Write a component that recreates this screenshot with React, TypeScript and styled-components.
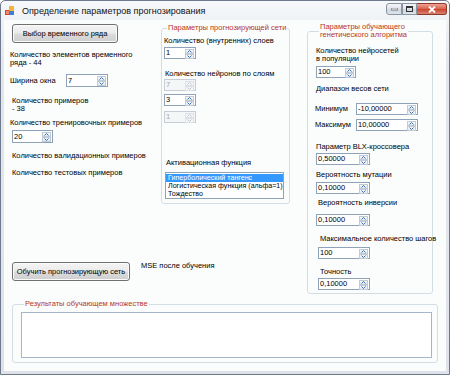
import React from "react";
import styled, { createGlobalStyle } from "styled-components";

const Global = createGlobalStyle`
  html, body {
    margin: 0;
    padding: 0;
    background: #ffffff;
  }
  body {
    font-family: "Liberation Sans", Arial, sans-serif;
    font-size: 7.5px;
    color: #000;
  }
`;

const Window = styled.div`
  width: 450px;
  height: 375px;
  box-sizing: border-box;
  border: 1px solid #6f7b8c;
  border-radius: 5px 5px 0 0;
  background: linear-gradient(#f6f8fa, #e2e7ed 60px, #dde3e9);
  display: flex;
  flex-direction: column;
  padding: 0 3px 3px 3px;
`;

const TitleBar = styled.div`
  height: 19px;
  display: flex;
  align-items: center;
  padding-left: 1px;
`;

const TitleText = styled.span`
  font-size: 9px;
  margin-left: 7px;
  color: #111;
  flex: 1;
`;

const CaptionButtons = styled.div`
  display: flex;
  align-self: flex-start;
  margin-top: 2px;
  margin-right: -1px;
`;

const CaptionButton = styled.div<{ $close?: boolean; $w: number }>`
  width: ${(p) => p.$w}px;
  height: 12px;
  box-sizing: border-box;
  border: 1px solid ${(p) => (p.$close ? "#8d3a2c" : "#8a94a2")};
  border-left-width: ${(p) => (p.$close ? 0 : 1)}px;
  border-radius: ${(p) => (p.$close ? "0 3px 3px 0" : "0")};
  background: ${(p) =>
    p.$close
      ? "linear-gradient(#eea394, #d8604a 50%, #c9452d 51%, #d8826f)"
      : "linear-gradient(#f3f5f8, #dfe4ea 50%, #cfd6de 51%, #dde3ea)"};
  display: flex;
  align-items: center;
  justify-content: center;
  &:first-child {
    border-radius: 3px 0 0 3px;
  }
`;

const Client = styled.div`
  flex: 1;
  background: #fbfdfd;
  display: flex;
  flex-direction: column;
`;

const TopArea = styled.div`
  display: flex;
  align-items: flex-start;
`;

const LeftColumn = styled.div`
  width: 157px;
  padding-left: 6px;
  box-sizing: border-box;
  display: flex;
  flex-direction: column;
  align-items: flex-start;
`;

const Label = styled.div<{ $mt?: number; $ml?: number; $w?: number }>`
  margin-top: ${(p) => p.$mt ?? 0}px;
  margin-left: ${(p) => p.$ml ?? 0}px;
  ${(p) => (p.$w ? `width: ${p.$w}px; flex: none;` : "")}
  line-height: 8px;
  font-size: 7.5px;
  white-space: nowrap;
`;

const Button = styled.div<{ $mt?: number; $ml?: number; $w: number }>`
  margin-top: ${(p) => p.$mt ?? 0}px;
  margin-left: ${(p) => p.$ml ?? 0}px;
  width: ${(p) => p.$w}px;
  height: 19px;
  box-sizing: border-box;
  border: 1px solid #707070;
  border-radius: 3px;
  background: linear-gradient(#f4f4f4, #ebebeb 48%, #dcdcdc 52%, #cfcfcf);
  box-shadow: inset 0 0 0 1px #fbfbfb;
  display: flex;
  align-items: center;
  justify-content: center;
  font-size: 7.5px;
  flex: none;
`;

const Row = styled.div<{ $mt?: number; $ml?: number }>`
  display: flex;
  align-items: center;
  margin-top: ${(p) => p.$mt ?? 0}px;
  margin-left: ${(p) => p.$ml ?? 0}px;
`;

const TopRow = styled(Row)`
  align-items: flex-start;
`;

const SpinBox = styled.div<{
  $mt?: number;
  $ml?: number;
  $w: number;
  $h?: number;
  $disabled?: boolean;
}>`
  margin-top: ${(p) => p.$mt ?? 0}px;
  margin-left: ${(p) => p.$ml ?? 0}px;
  width: ${(p) => p.$w}px;
  height: ${(p) => p.$h ?? 12}px;
  box-sizing: border-box;
  border: 1px solid ${(p) => (p.$disabled ? "#c6cdd6" : "#8fa3b8")};
  background: ${(p) => (p.$disabled ? "#f5f6f7" : "#ffffff")};
  color: ${(p) => (p.$disabled ? "#a8a8a8" : "#000")};
  display: flex;
  align-items: stretch;
  flex: none;
`;

const SpinValue = styled.div`
  flex: 1;
  font-size: 7.5px;
  line-height: 10px;
  padding-left: 1px;
  display: flex;
  align-items: center;
`;

const SpinButtons = styled.div`
  width: 9px;
  display: flex;
  flex-direction: column;
  padding: 1px 1px 1px 0;
`;

const SpinArrow = styled.div<{ $disabled?: boolean }>`
  flex: 1;
  box-sizing: border-box;
  border: 1px solid ${(p) => (p.$disabled ? "#dde2e8" : "#bfcbd8")};
  background: ${(p) => (p.$disabled ? "#f4f5f6" : "linear-gradient(#f7f9fb, #e3e9ef)")};
  display: flex;
  align-items: center;
  justify-content: center;
`;

const Group = styled.fieldset<{ $mt?: number; $ml?: number; $w: number; $pl: number; $pb: number }>`
  margin: ${(p) => p.$mt ?? 0}px 0 0 ${(p) => p.$ml ?? 0}px;
  width: ${(p) => p.$w}px;
  box-sizing: border-box;
  border: 1px solid #d3dde4;
  border-radius: 3px;
  padding: 0 0 ${(p) => p.$pb}px ${(p) => p.$pl}px;
  display: flex;
  flex-direction: column;
  align-items: flex-start;
  min-width: 0;
`;

const Legend = styled.legend`
  color: #b8361c;
  font-size: 7.5px;
  line-height: 8px;
  padding: 0 1px;
  margin-left: 3px;
  white-space: nowrap;
`;

const ListBox = styled.div<{ $mt?: number; $ml?: number }>`
  margin-top: ${(p) => p.$mt ?? 0}px;
  margin-left: ${(p) => p.$ml ?? 0}px;
  width: 119px;
  height: 27px;
  box-sizing: border-box;
  border: 1px solid #8fa3b8;
  background: #fff;
  padding: 1px 0 0 0;
  overflow: hidden;
`;

const ListItem = styled.div<{ $selected?: boolean }>`
  height: 8px;
  line-height: 8px;
  padding-left: 2px;
  font-size: 7.1px;
  white-space: nowrap;
  background: ${(p) => (p.$selected ? "#3399ff" : "transparent")};
  color: ${(p) => (p.$selected ? "#fff" : "#000")};
`;

const TextArea = styled.div`
  margin-top: 4px;
  width: 411px;
  height: 46px;
  box-sizing: border-box;
  border: 1px solid #a4b6c7;
  background: #fff;
`;

const Arrow = ({ down, disabled }: { down?: boolean; disabled?: boolean }) => (
  <svg width="5" height="3" viewBox="0 0 5 3">
    <path
      d={down ? "M0.5 0.5 L2.5 2.5 L4.5 0.5" : "M0.5 2.5 L2.5 0.5 L4.5 2.5"}
      fill="none"
      stroke={disabled ? "#c2c8cf" : "#3c6fb0"}
      strokeWidth="1"
    />
  </svg>
);

type SpinProps = {
  value: string;
  w: number;
  mt?: number;
  ml?: number;
  h?: number;
  disabled?: boolean;
};

const Spin = ({ value, w, mt, ml, h, disabled }: SpinProps) => (
  <SpinBox $w={w} $mt={mt} $ml={ml} $h={h} $disabled={disabled}>
    <SpinValue>{value}</SpinValue>
    <SpinButtons>
      <SpinArrow $disabled={disabled}>
        <Arrow disabled={disabled} />
      </SpinArrow>
      <SpinArrow $disabled={disabled}>
        <Arrow down disabled={disabled} />
      </SpinArrow>
    </SpinButtons>
  </SpinBox>
);

const AppIcon = () => (
  <svg width="10" height="10" viewBox="0 0 10 10">
    <rect x="0" y="4" width="5" height="5" fill="#d8452b" />
    <rect x="4" y="0" width="5" height="5" fill="#f2b632" />
    <rect x="5" y="5" width="4" height="4" fill="#3d7fd6" />
    <rect x="1" y="5" width="3" height="3" fill="#f08a70" />
  </svg>
);

export default function App() {
  return (
    <>
      <Global />
      <Window>
        <TitleBar>
          <AppIcon />
          <TitleText>Определение параметров прогнозирования</TitleText>
          <CaptionButtons>
            <CaptionButton $w={16}>
              <svg width="7" height="3" viewBox="0 0 7 3">
                <rect x="0" y="0" width="7" height="2" fill="#fff" stroke="#333" strokeWidth="0.6" />
              </svg>
            </CaptionButton>
            <CaptionButton $w={15}>
              <svg width="7" height="6" viewBox="0 0 7 6">
                <rect x="0.5" y="0.5" width="6" height="5" fill="none" stroke="#333" strokeWidth="1" />
                <rect x="1" y="1" width="5" height="1" fill="#333" />
              </svg>
            </CaptionButton>
            <CaptionButton $w={30} $close>
              <svg width="8" height="7" viewBox="0 0 8 7">
                <path d="M1 0.5 L7 6.5 M7 0.5 L1 6.5" stroke="#fff" strokeWidth="1.8" />
              </svg>
            </CaptionButton>
          </CaptionButtons>
        </TitleBar>
        <Client>
          <TopArea>
            <LeftColumn>
              <Button $mt={4} $ml={2} $w={106}>
                Выбор временного ряда
              </Button>
              <Label $mt={8}>
                Количество элементов временного
                <br />
                ряда - 44
              </Label>
              <Row $mt={7}>
                <Label $w={56}>Ширина окна</Label>
                <Spin value="7" w={42} h={13} />
              </Row>
              <Label $mt={10} $ml={2}>
                Количество примеров
                <br />- 38
              </Label>
              <Label $mt={6}>Количество тренировочных примеров</Label>
              <Spin value="20" w={41} h={13} mt={3} ml={2} />
              <Label $mt={9} $ml={2}>
                Количество валидационных примеров
              </Label>
              <Label $mt={9} $ml={2}>
                Количество тестовых примеров
              </Label>
              <TopRow $mt={85} $ml={2}>
                <Button $w={118}>Обучить прогнозирующую сеть</Button>
                <Label $ml={11}>MSE после обучения</Label>
              </TopRow>
            </LeftColumn>

            <Group $mt={4} $w={129} $pl={2} $pb={4}>
              <Legend>Параметры прогнозирующей сети</Legend>
              <Label $mt={5}>Количество (внутренних) слоев</Label>
              <Spin value="1" w={32} mt={2} />
              <Label $mt={11} $ml={1}>
                Количество нейронов по слоям
              </Label>
              <Spin value="7" w={32} mt={1} disabled />
              <Spin value="3" w={32} mt={3} />
              <Spin value="1" w={32} mt={5} disabled />
              <Label $mt={36} $ml={2}>
                Активационная функция
              </Label>
              <ListBox $mt={5} $ml={1}>
                <ListItem $selected>Гиперболический тангенс</ListItem>
                <ListItem>Логистическая функция (альфа=1)</ListItem>
                <ListItem>Тождество</ListItem>
              </ListBox>
            </Group>

            <Group $mt={3} $ml={17} $w={126} $pl={8} $pb={3}>
              <Legend>
                Параметры обучающего
                <br />
                генетического алгоритма
              </Legend>
              <Label $mt={8}>
                Количество нейросетей
                <br />в популяции
              </Label>
              <Spin value="100" w={40} mt={3} />
              <Label $mt={7}>Диапазон весов сети</Label>
              <Row $mt={10} $ml={-1}>
                <Label $w={41}>Минимум</Label>
                <Spin value="-10,00000" w={62} />
              </Row>
              <Row $mt={4} $ml={-1}>
                <Label $w={41}>Максимум</Label>
                <Spin value="10,00000" w={62} />
              </Row>
              <Label $mt={12}>Параметр BLX-кроссовера</Label>
              <Spin value="0,50000" w={54} mt={2} />
              <Label $mt={6}>Вероятность мутации</Label>
              <Spin value="0,10000" w={54} mt={3} />
              <Label $mt={5} $ml={2}>
                Вероятность инверсии
              </Label>
              <Spin value="0,10000" w={54} mt={7} />
              <Label $mt={9} $ml={4}>
                Максимальное количество шагов
              </Label>
              <Spin value="100" w={52} mt={4} ml={2} />
              <Label $mt={9} $ml={4}>
                Точность
              </Label>
              <Spin value="0,10000" w={52} mt={2} ml={2} />
            </Group>
          </TopArea>

          <Group $mt={6} $ml={8} $w={426} $pl={8} $pb={4}>
            <Legend>Результаты обучающем множестве</Legend>
            <TextArea />
          </Group>
        </Client>
      </Window>
    </>
  );
}
